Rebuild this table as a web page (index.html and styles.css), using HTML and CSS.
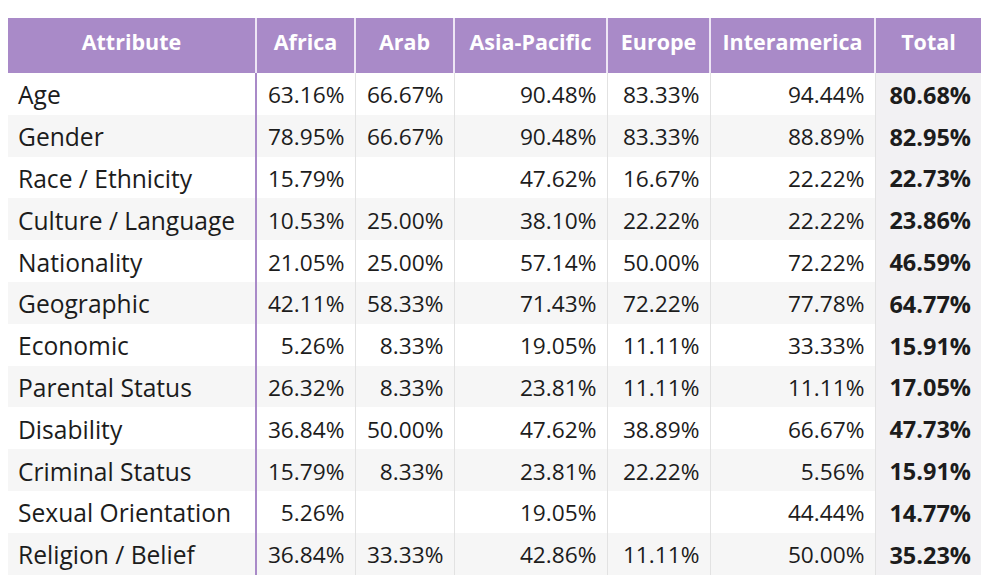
FILE: index.html
```html
<!DOCTYPE html>
<html>
<head>
<meta charset="utf-8">
<link rel="stylesheet" href="styles.css">
</head>
<body>
<table class="grid">
  <colgroup>
    <col class="c-attr"><col class="c-africa"><col class="c-arab"><col class="c-asia"><col class="c-europe"><col class="c-inter"><col class="c-total">
  </colgroup>
  <thead>
    <tr>
      <th class="attr">Attribute</th><th>Africa</th><th>Arab</th><th>Asia-Pacific</th><th>Europe</th><th>Interamerica</th><th>Total</th>
    </tr>
  </thead>
  <tbody>
    <tr><td class="attr">Age</td><td>63.16%</td><td>66.67%</td><td>90.48%</td><td>83.33%</td><td>94.44%</td><td class="total">80.68%</td></tr>
    <tr><td class="attr">Gender</td><td>78.95%</td><td>66.67%</td><td>90.48%</td><td>83.33%</td><td>88.89%</td><td class="total">82.95%</td></tr>
    <tr><td class="attr">Race / Ethnicity</td><td>15.79%</td><td></td><td>47.62%</td><td>16.67%</td><td>22.22%</td><td class="total">22.73%</td></tr>
    <tr><td class="attr">Culture / Language</td><td>10.53%</td><td>25.00%</td><td>38.10%</td><td>22.22%</td><td>22.22%</td><td class="total">23.86%</td></tr>
    <tr><td class="attr">Nationality</td><td>21.05%</td><td>25.00%</td><td>57.14%</td><td>50.00%</td><td>72.22%</td><td class="total">46.59%</td></tr>
    <tr><td class="attr">Geographic</td><td>42.11%</td><td>58.33%</td><td>71.43%</td><td>72.22%</td><td>77.78%</td><td class="total">64.77%</td></tr>
    <tr><td class="attr">Economic</td><td>5.26%</td><td>8.33%</td><td>19.05%</td><td>11.11%</td><td>33.33%</td><td class="total">15.91%</td></tr>
    <tr><td class="attr">Parental Status</td><td>26.32%</td><td>8.33%</td><td>23.81%</td><td>11.11%</td><td>11.11%</td><td class="total">17.05%</td></tr>
    <tr><td class="attr">Disability</td><td>36.84%</td><td>50.00%</td><td>47.62%</td><td>38.89%</td><td>66.67%</td><td class="total">47.73%</td></tr>
    <tr><td class="attr">Criminal Status</td><td>15.79%</td><td>8.33%</td><td>23.81%</td><td>22.22%</td><td>5.56%</td><td class="total">15.91%</td></tr>
    <tr><td class="attr">Sexual Orientation</td><td>5.26%</td><td></td><td>19.05%</td><td></td><td>44.44%</td><td class="total">14.77%</td></tr>
    <tr><td class="attr">Religion / Belief</td><td>36.84%</td><td>33.33%</td><td>42.86%</td><td>11.11%</td><td>50.00%</td><td class="total">35.23%</td></tr>
  </tbody>
</table>
</body>
</html>
```

FILE: styles.css
```css
html, body {
  margin: 0;
  background: #ffffff;
}
body {
  padding: 18px 0 0 8px;
  font-family: "Open Sans", "Noto Sans", sans-serif;
  color: #1c1c1c;
}
.grid {
  border-collapse: collapse;
  table-layout: fixed;
  width: 973px;
}
.c-attr { width: 248px; }
.c-africa { width: 99px; }
.c-arab { width: 99px; }
.c-asia { width: 153px; }
.c-europe { width: 103px; }
.c-inter { width: 165px; }
.c-total { width: 106px; }

.grid th {
  background: #a98ac8;
  color: #ffffff;
  font-weight: 700;
  font-size: 21.5px;
  height: 55px;
  padding: 0 4px 9px;
  text-align: center;
  border-left: 2px solid #eee6f5;
  box-sizing: border-box;
  white-space: nowrap;
}
.grid th:first-child { border-left: none; }

.grid td {
  height: 41.8px;
  padding: 2px 10px 0 4px;
  font-size: 22.7px;
  text-align: right;
  border-left: 1px solid #e2e2e2;
  white-space: nowrap;
  box-sizing: border-box;
}
.grid td.attr {
  text-align: left;
  padding-left: 10px;
  font-size: 24.6px;
  border-left: none;
  border-right: 2px solid #a98ac8;
}
.grid td.attr + td { border-left: none; }
.grid tbody tr:nth-child(even) { background: #f6f6f6; }
.grid td.total {
  font-weight: 700;
  font-size: 23.5px;
  background: #f2f1f3;
}
```
